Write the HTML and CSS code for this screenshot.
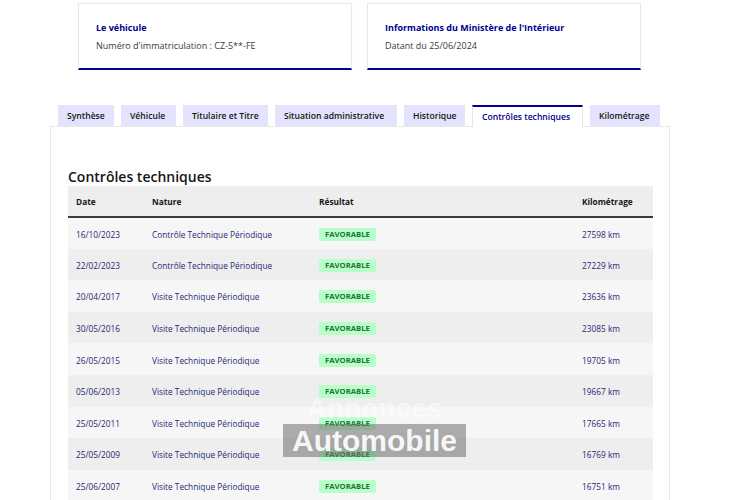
FILE: index.html
```html
<!DOCTYPE html>
<html lang="fr">
<head>
<meta charset="utf-8">
<link rel="stylesheet" href="styles.css">
</head>
<body>
<div class="page">
  <div class="cards">
    <div class="card">
      <div class="card-title">Le véhicule</div>
      <div class="card-sub">Numéro d'immatriculation : CZ-5**-FE</div>
    </div>
    <div class="card">
      <div class="card-title">Informations du Ministère de l'Intérieur</div>
      <div class="card-sub">Datant du 25/06/2024</div>
    </div>
  </div>

  <div class="tabs">
    <div class="tab">Synthèse</div>
    <div class="tab">Véhicule</div>
    <div class="tab">Titulaire et Titre</div>
    <div class="tab">Situation administrative</div>
    <div class="tab">Historique</div>
    <div class="tab active">Contrôles techniques</div>
    <div class="tab">Kilométrage</div>
  </div>

  <div class="panel">
    <h2 class="heading">Contrôles techniques</h2>
    <table class="ct">
      <thead>
        <tr><th class="c-date">Date</th><th class="c-nat">Nature</th><th class="c-res">Résultat</th><th class="c-km">Kilométrage</th></tr>
      </thead>
      <tbody>
        <tr><td>16/10/2023</td><td>Contrôle Technique Périodique</td><td><span class="badge">FAVORABLE</span></td><td>27598 km</td></tr>
        <tr><td>22/02/2023</td><td>Contrôle Technique Périodique</td><td><span class="badge">FAVORABLE</span></td><td>27229 km</td></tr>
        <tr><td>20/04/2017</td><td>Visite Technique Périodique</td><td><span class="badge">FAVORABLE</span></td><td>23636 km</td></tr>
        <tr><td>30/05/2016</td><td>Visite Technique Périodique</td><td><span class="badge">FAVORABLE</span></td><td>23085 km</td></tr>
        <tr><td>26/05/2015</td><td>Visite Technique Périodique</td><td><span class="badge">FAVORABLE</span></td><td>19705 km</td></tr>
        <tr><td>05/06/2013</td><td>Visite Technique Périodique</td><td><span class="badge">FAVORABLE</span></td><td>19667 km</td></tr>
        <tr><td>25/05/2011</td><td>Visite Technique Périodique</td><td><span class="badge">FAVORABLE</span></td><td>17665 km</td></tr>
        <tr><td>25/05/2009</td><td>Visite Technique Périodique</td><td><span class="badge">FAVORABLE</span></td><td>16769 km</td></tr>
        <tr><td>25/06/2007</td><td>Visite Technique Périodique</td><td><span class="badge">FAVORABLE</span></td><td>16751 km</td></tr>
      </tbody>
    </table>
  </div>
</div>
<div class="wm">
  <div class="wm-top">Annonces</div>
  <div class="wm-box">Automobile</div>
</div>
</body>
</html>
```
FILE: styles.css
```css
* { box-sizing: border-box; }
html, body { margin: 0; padding: 0; background: #fff; }
body {
  font-family: "Open Sans", "Noto Sans", sans-serif;
  color: #161616;
  width: 750px;
  height: 500px;
  overflow: hidden;
  position: relative;
}
.page {
  padding-top: 3px;
  padding-left: 50px;
  width: 670px;
}
.cards {
  display: flex;
  gap: 15px;
  padding-left: 28px;
}
.card {
  width: 274px;
  height: 67px;
  border: 1px solid #e8e8e8;
  border-bottom: 2px solid #000091;
  padding: 17px 0 0 17px;
  box-shadow: 0 0 3px rgba(0,0,0,0.04);
}
.card-title {
  font-size: 9px;
  font-weight: 700;
  color: #000091;
  line-height: 14px;
}
.card-sub {
  font-size: 9px;
  color: #3a3a3a;
  line-height: 14px;
  margin-top: 4px;
}
.tabs {
  display: flex;
  gap: 7px;
  margin-top: 35px;
  padding-left: 8px;
  height: 21px;
}
.tab {
  background: #e3e3fd;
  font-size: 8.6px;
  font-weight: 600;
  color: #161616;
  height: 21px;
  line-height: 22px;
  padding: 0 9px;
  white-space: nowrap;
}
.tab:nth-child(1) { width: 56px; }
.tab:nth-child(2) { width: 55px; }
.tab:nth-child(3) { width: 85px; }
.tab:nth-child(4) { width: 122px; }
.tab:nth-child(5) { width: 61px; }
.tab:nth-child(6) { width: 111px; }
.tab:nth-child(7) { width: 70px; }
.tab.active {
  background: #fff;
  color: #000091;
  border-top: 2px solid #000091;
  border-left: 1px solid #e5e5e5;
  border-right: 1px solid #e5e5e5;
  line-height: 20px;
  height: 22px;
  position: relative;
  z-index: 1;
}
.panel {
  border: 1px solid #e8e8e8;
  padding: 0 17px 20px 17px;
  width: 620px;
}
.heading {
  margin: 0;
  padding-top: 41px;
  font-size: 14px;
  font-weight: 600;
  line-height: 18px;
  height: 59px;
  color: #161616;
}
.ct {
  border-collapse: collapse;
  width: 585px;
  font-size: 8.3px;
  table-layout: fixed;
}
.ct th {
  background: #eeeeee;
  text-align: left;
  font-weight: 700;
  height: 31px;
  padding: 0 0 0 8px;
  border-bottom: 2px solid #3a3a3a;
  color: #161616;
}
.c-date { width: 76px; }
.c-nat { width: 167px; }
.c-res { width: 263px; }
.c-km { width: 79px; }
.ct td {
  height: 31.6px;
  padding: 2px 0 0 8px;
  color: #272777;
  background: #f6f6f6;
  white-space: nowrap;
}
.ct tbody tr:nth-child(even) td { background: #eeeeee; }
.badge {
  display: inline-block;
  background: #b8fec9;
  color: #18753c;
  font-weight: 700;
  font-size: 7.7px;
  padding: 0 6px;
  height: 13px;
  line-height: 13px;
  border-radius: 2px;
}
.wm {
  position: absolute;
  left: 283px;
  top: 394px;
  width: 183px;
  pointer-events: none;
}
.wm-top {
  text-align: center;
  font-family: "Liberation Sans", sans-serif;
  font-size: 28px;
  line-height: 30px;
  color: rgba(255,255,255,0.5);
  font-weight: 700;
}
.wm-box {
  background: rgba(110,110,110,0.55);
  height: 33px;
  line-height: 34px;
  text-align: center;
  font-family: "Liberation Sans", sans-serif;
  font-weight: 700;
  font-size: 30px;
  color: rgba(255,255,255,0.92);
}
```
